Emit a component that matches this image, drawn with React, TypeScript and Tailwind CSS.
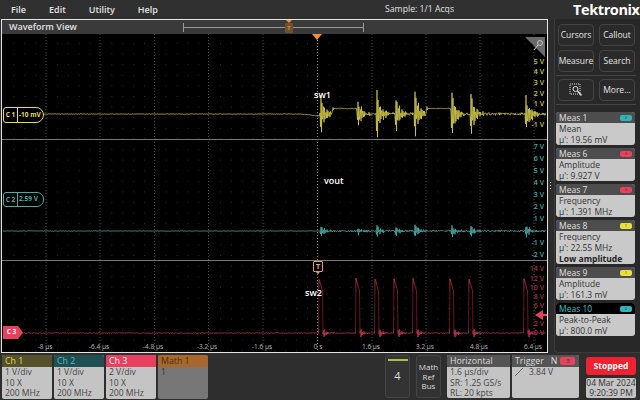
const sans = "font-['Open_Sans','Noto_Sans',sans-serif]";
const gridX = [46, 100, 154.5, 208.5, 263, 317.5, 372, 426, 480, 534];
const bursts = [320, 357, 376, 395, 414, 451, 470, 525];
const burstAmp = [0.85, 0.6, 1, 0.75, 1, 1, 0.9, 0.9];

// small repeatable noise, so the trace looks the same on every load
function noise(i: number) {
  const v = Math.sin(i * 12.9898) * 43758.5453;
  return v - Math.floor(v);
}

function ringing(base: number, amp: number, hash: number, seed: number, raised: (x: number) => number) {
  let d = `M3 ${base}`;
  for (let x = 3; x < 546; x += 0.5) {
    const r = raised(x);
    const h = x < 320 ? 0.25 : r !== 0 ? 0.3 : hash;
    let y = base + r + (noise(x * 2 + seed) - 0.5) * 2 * h;
    bursts.forEach((b, i) => {
      const t = x - b;
      if (t >= 0 && t < 14) {
        const k = Math.exp(-t / 4.5) * (0.6 + noise(x + seed) * 0.4);
        y += Math.sin(t * 5.2) * amp * burstAmp[i] * k;
      }
    });
    d += ` L${x} ${y.toFixed(1)}`;
  }
  return d;
}

function redTrace() {
  let d = "M3 333";
  for (let x = 3; x < 546; x += 0.5) {
    let y = 333 + (noise(x * 3) - 0.5) * 0.7;
    for (const b of bursts) {
      const t = x - b;
      if (t >= -1 && t < 3) y = 278 + (t + 1) * 3.5 + noise(x * 5) * 1.5;
      if (t >= 3 && t < 14) {
        y += Math.sin(t * 5.2) * 6 * Math.exp(-(t - 3) / 3);
      }
    }
    d += ` L${x} ${y.toFixed(1)}`;
  }
  return d;
}

const yellowRaised = (x: number) => {
  if (x < 300) return 0;
  if (x < 320) return (x - 300) * 0.1;
  if (x > 332 && x < 357) return -5.5;
  if (x > 426 && x < 451) return -5.5;
  return 0;
};

function Grid() {
  const rows = [];
  for (let y = 43; y < 352; y += 10.6) rows.push(y);
  const cols = [];
  for (let x = 13.5; x < 546; x += 10.87) cols.push(x);
  return (
    <svg className="absolute inset-0 h-full w-full" viewBox="0 0 545 318" preserveAspectRatio="none">
      <defs>
        <linearGradient id="red" gradientUnits="userSpaceOnUse" x1="0" y1="277" x2="0" y2="340">
          <stop offset="0" stopColor="#dc3c62" />
          <stop offset="0.3" stopColor="#7e1830" />
          <stop offset="0.8" stopColor="#7e1830" />
          <stop offset="0.9" stopColor="#c8385a" />
          <stop offset="1" stopColor="#c8385a" />
        </linearGradient>
      </defs>
      <g transform="translate(-2 -34)">
        {rows.map((y) =>
          cols.map((x) => <rect key={`${x}-${y}`} x={x} y={y} width="1" height="1" fill="#2e2e2e" />)
        )}
        {gridX.map((x) => (
          <line key={x} x1={x} x2={x} y1="34" y2="352" stroke="#4a4a4a" strokeWidth="1" strokeDasharray="1 2" />
        ))}
        <line x1="317.5" x2="317.5" y1="34" y2="352" stroke="#8a8a8a" strokeWidth="1" strokeDasharray="1 2" />
        <path d={ringing(114, 34, 1.4, 1, yellowRaised)} fill="none" stroke="#e0d850" strokeWidth="0.7" />
        <path d={ringing(231, 9, 0.9, 2, () => 0)} fill="none" stroke="#49ada6" strokeWidth="0.8" />
        <path d={redTrace()} fill="none" stroke="url(#red)" strokeWidth="0.8" />
      </g>
    </svg>
  );
}

function AxisLabels({ color, items }: { color: string; items: { t: string; y: number }[] }) {
  return (
    <>
      {items.map((l) => (
        <span
          key={l.t}
          className={`absolute right-[3px] text-[7px] leading-[8px] font-semibold ${color}`}
          style={{ top: l.y - 4 }}
        >
          {l.t}
        </span>
      ))}
    </>
  );
}

function Measure({
  name, kind, value, badge, extra, active,
}: {
  name: string; kind: string; value: string; badge: "t" | "r" | "y"; extra?: string; active?: boolean;
}) {
  const badgeCls = badge === "t" ? "bg-[#2fb4bb]" : badge === "r" ? "bg-[#e8405f]" : "bg-[#e6e23c]";
  const num = badge === "t" ? "2" : badge === "r" ? "3" : "1";
  return (
    <div className="mr-[1px] overflow-hidden rounded-[3px] bg-[#c9c9c9] text-[8.5px] leading-[11px] text-[#333]">
      <div className={`flex h-[11px] items-center justify-between px-[3px] ${active ? "bg-black text-[#3fc0c4]" : "bg-[#4d4d4d] text-[#e0e0e0]"}`}>
        <span>{name}</span>
        <span className={`flex h-[6px] w-[12px] items-center justify-center rounded-[2px] text-[4px] leading-none text-[#333] ${badgeCls}`}>{num}</span>
      </div>
      <div className="px-[3px]">
        <div>{kind}</div>
        <div>{value}</div>
        {extra && <div className="font-bold text-[#222]">{extra}</div>}
      </div>
    </div>
  );
}

function SideButton({ children }: { children: React.ReactNode }) {
  return (
    <div className="flex h-[22px] w-[36px] items-center justify-center rounded-[4px] border border-[#444] bg-[#2a2a2a] text-[8.5px] whitespace-nowrap text-[#e4e4e4]">
      {children}
    </div>
  );
}

function ChannelCard({ title, head, titleCls, lines }: { title: string; head: string; titleCls: string; lines: string[] }) {
  return (
    <div className="h-[44px] w-[50px] overflow-hidden rounded-[2px] bg-[#c4c4c4] text-[8.5px] leading-[10.5px] text-[#444]">
      <div className={`h-[12px] px-[3px] text-[8.8px] leading-[12px] ${head} ${titleCls}`}>{title}</div>
      <div className="px-[3px]">
        {lines.map((l) => (
          <div key={l}>{l}</div>
        ))}
      </div>
    </div>
  );
}

export default function App() {
  return (
    <div className={`flex h-[400px] w-[640px] flex-col overflow-hidden bg-[#2c2c2c] ${sans}`}>
      {/* menu bar */}
      <div className="flex h-[19px] items-center bg-[#303030] text-[9px] font-semibold text-[#e2e2e2]">
        <div className="flex w-[357px] gap-[23px] pl-[11px]">
          <span>File</span>
          <span>Edit</span>
          <span>Utility</span>
          <span>Help</span>
        </div>
        <span className="w-[216px] pl-[28px] text-[8.7px] font-normal">Sample: 1/1 Acqs</span>
        <span className="text-[14.5px] font-bold tracking-[-0.4px] text-white">Tektronix</span>
      </div>

      <div className="flex min-h-0 flex-1">
        {/* waveform view */}
        <div className="ml-[1px] flex w-[547px] flex-col border border-[#e4e4e4] bg-black">
          <div className="relative flex h-[14px] items-center bg-[#3a3a3a] pl-[7px] text-[9px] font-semibold text-[#e0e0e0]">
            Waveform View
            <div className="absolute top-[3px] left-[181px] h-[9px] w-[181px] border-x border-[#999]">
              <div className="mt-[4px] h-px bg-[#999]" />
            </div>
            <div className="absolute top-[3px] left-[283px] flex h-[10px] w-[8px] items-center justify-center rounded-[1px] bg-[#6e5230] text-[6px] leading-none text-[#e0a060]">
              T
            </div>
            <div className="absolute top-0 left-[284px] h-0 w-0 border-x-[3px] border-t-[3px] border-x-transparent border-t-[#f0913a]" />
          </div>
          <div className="relative flex-1">
            <Grid />
            {/* pane separators */}
            <div className="absolute top-[105px] right-0 left-0 h-px bg-[#777]" />
            <div className="absolute top-[226px] right-0 left-0 h-px bg-[#777]" />

            {/* trigger markers */}
            <div className="absolute top-0 left-[310px] h-0 w-0 border-x-[5px] border-t-[6px] border-x-transparent border-t-[#f0913a]" />
            <div className="absolute top-[227px] left-[311px] flex h-[11px] w-[10px] items-center justify-center rounded-[1px] border border-[#e89a4a] bg-black text-[7px] leading-none font-bold text-[#e8b070]">
              T
            </div>
            <div className="absolute top-[238px] left-[314px] h-0 w-0 border-x-[2px] border-t-[2px] border-x-transparent border-t-[#e89a4a]" />

            {/* pinned corner */}
            <svg className="absolute top-[3px] right-[2px]" width="20" height="20" viewBox="0 0 20 20">
              <polygon points="0,0 20,0 20,20" fill="#6a6a6a" />
              <circle cx="15" cy="6" r="2.4" fill="none" stroke="#ccc" strokeWidth="1" />
              <path d="M13 8 L9 13" stroke="#ccc" strokeWidth="1" />
            </svg>

            {/* channel badges */}
            <div className="absolute top-[73px] left-[1px] flex h-[16px] w-[41px] items-center rounded-l-[3px] rounded-r-[8px] border border-[#e6dc50] bg-black text-[6.5px] leading-none font-bold text-[#e6dc50]">
              <span className="w-[14px] border-r border-[#e6dc50] text-center leading-[14px]">C 1</span>
              <span className="pl-[1px] whitespace-nowrap">-10 mV</span>
            </div>
            <div className="absolute top-[158px] left-[1px] flex h-[15px] w-[41px] items-center rounded-l-[3px] rounded-r-[7px] border border-[#49ada6] bg-black text-[6.5px] leading-none font-bold text-[#49ada6]">
              <span className="w-[14px] border-r border-[#49ada6] text-center leading-[13px]">C 2</span>
              <span className="pl-[1px] whitespace-nowrap">2.59 V</span>
            </div>
            <div className="absolute top-[292px] left-[1px] flex h-[13px] w-[20px] items-center justify-center bg-[#e8405f] pr-[3px] text-[6.5px] leading-none font-bold text-white [clip-path:polygon(0_0,75%_0,100%_50%,75%_100%,0_100%)]">
              C 3
            </div>

            {/* annotations */}
            <span className="absolute top-[56px] left-[312px] text-[9px] leading-[10px] font-semibold text-white">sw1</span>
            <span className="absolute top-[142px] left-[322px] text-[9px] leading-[10px] font-semibold text-white">vout</span>
            <span className="absolute top-[254px] left-[303px] text-[9px] leading-[10px] font-semibold text-white">sw2</span>

            <AxisLabels
              color="text-[#cfc94a]"
              items={[
                { t: "5 V", y: 28 },
                { t: "4 V", y: 38 },
                { t: "3 V", y: 49 },
                { t: "2 V", y: 60 },
                { t: "1 V", y: 70 },
                { t: "-1 V", y: 91 },
              ]}
            />
            <AxisLabels
              color="text-[#49ada6]"
              items={[
                { t: "7 V", y: 113 },
                { t: "6 V", y: 125 },
                { t: "5 V", y: 137 },
                { t: "4 V", y: 149 },
                { t: "3 V", y: 161 },
                { t: "2 V", y: 173 },
                { t: "1 V", y: 185 },
                { t: "-1 V", y: 209 },
                { t: "-2 V", y: 221 },
              ]}
            />
            <AxisLabels
              color="text-[#a82c48]"
              items={[
                { t: "14 V", y: 235 },
                { t: "12 V", y: 245 },
                { t: "10 V", y: 254 },
                { t: "8 V", y: 263 },
                { t: "6 V", y: 272 },
                { t: "2 V", y: 290 },
                { t: "0 V", y: 299 },
              ]}
            />
            <div className="absolute top-[276px] right-[4px] h-0 w-0 border-y-[5px] border-r-[8px] border-y-transparent border-r-[#e8405f]" />
            <div className="absolute top-[280px] right-0 h-[2px] w-[5px] bg-[#e8405f]" />

            {/* time axis */}
            {[
              ["-8 µs", 43],
              ["-6.4 µs", 97],
              ["-4.8 µs", 151],
              ["-3.2 µs", 205],
              ["-1.6 µs", 260],
              ["0 s", 316],
              ["1.6 µs", 369],
              ["3.2 µs", 423],
              ["4.8 µs", 477],
              ["6.4 µs", 531],
            ].map(([t, x]) => (
              <span
                key={t}
                className="absolute bottom-0 -translate-x-1/2 text-[6.5px] leading-[10px] whitespace-nowrap text-[#bbb]"
                style={{ left: x }}
              >
                {t}
              </span>
            ))}
          </div>
        </div>

        {/* right side panel */}
        <div className="relative flex flex-1 pl-[6px]">
          <div className="absolute top-[163px] left-[2px] flex flex-col gap-[2px]">
            <span className="h-px w-px bg-[#ddd]" />
            <span className="h-px w-px bg-[#ddd]" />
            <span className="h-px w-px bg-[#ddd]" />
          </div>
          <div className="flex flex-1 flex-col rounded-bl-[4px] border-b border-l border-[#3c3c3c] bg-[#282828] pt-[5px] pr-[4px] pl-[1px]">
            <div className="grid grid-cols-[36px_36px] gap-x-[5px] gap-y-[4px] border-b border-[#444] pb-[3px] pl-[2px]">
              <SideButton>Cursors</SideButton>
              <SideButton>Callout</SideButton>
              <SideButton>Measure</SideButton>
              <SideButton>Search</SideButton>
            </div>
            <div className="grid grid-cols-[36px_36px] gap-x-[5px] border-b border-[#444] py-[3px] pl-[2px]">
              <SideButton>
                <svg width="14" height="14" viewBox="0 0 14 14" fill="none" stroke="#ddd" strokeWidth="1">
                  <rect x="1" y="1" width="10" height="10" strokeDasharray="1 1" />
                  <circle cx="6.5" cy="6" r="2.5" />
                  <path d="M8.5 8 L12.5 12.5" strokeWidth="1.5" />
                </svg>
              </SideButton>
              <SideButton>More...</SideButton>
            </div>
            <div className="flex flex-col gap-[3px] pt-[7px]">
              <Measure name="Meas 1" kind="Mean" value="µ': 19.56 mV" badge="t" />
              <Measure name="Meas 6" kind="Amplitude" value="µ': 9.927 V" badge="r" />
              <Measure name="Meas 7" kind="Frequency" value="µ': 1.391 MHz" badge="r" />
              <Measure name="Meas 8" kind="Frequency" value="µ': 22.55 MHz" badge="y" extra="Low amplitude" />
              <Measure name="Meas 9" kind="Amplitude" value="µ': 161.3 mV" badge="y" />
              <Measure name="Meas 10" kind="Peak-to-Peak" value="µ': 800.0 mV" badge="t" active />
            </div>
          </div>
        </div>
      </div>

      {/* bottom bar */}
      <div className="flex h-[47px] items-start bg-[#2e2e2e] pt-[2px] pl-[2px]">
        <div className="flex gap-[2px]">
          <ChannelCard title="Ch 1" head="bg-[#55512a]" titleCls="text-[#e6dc50]" lines={["1 V/div", "10 X", "200 MHz"]} />
          <ChannelCard title="Ch 2" head="bg-[#1f4f50]" titleCls="text-[#49c0c0]" lines={["1 V/div", "10 X", "200 MHz"]} />
          <ChannelCard title="Ch 3" head="bg-[#e8405f]" titleCls="text-white" lines={["2 V/div", "10 X", "200 MHz"]} />
          <div className="h-[44px] w-[50px] overflow-hidden rounded-[2px] bg-[#777] text-[8.5px] leading-[10.5px] text-[#333]">
            <div className="h-[12px] bg-[#a8672c] px-[3px] text-[8.8px] leading-[12px] text-[#4a3015]">Math 1</div>
            <div className="px-[3px]">1</div>
          </div>
        </div>

        <div className="ml-[177px] flex h-[43px] w-[25px] flex-col items-center rounded-[3px] border border-[#444] bg-[#333] text-[#ddd]">
          <div className="mt-[3px] h-[2px] w-[20px] bg-[#a8c04a]" />
          <span className="mt-[7px] text-[11px]">4</span>
        </div>
        <div className="ml-[6px] flex h-[43px] w-[25px] flex-col items-center justify-center rounded-[3px] border border-[#444] bg-[#333] text-[8px] leading-[9.5px] text-[#ddd]">
          <span>Math</span>
          <span>Ref</span>
          <span>Bus</span>
        </div>

        <div className="ml-[6px] h-[43px] w-[63px] overflow-hidden rounded-[2px] bg-[#c4c4c4] text-[8.5px] leading-[10.5px] text-[#444]">
          <div className="h-[12px] bg-[#555] px-[3px] text-[8.8px] leading-[12px] text-[#ddd]">Horizontal</div>
          <div className="px-[3px]">
            <div>1.6 µs/div</div>
            <div>SR: 1.25 GS/s</div>
            <div>RL: 20 kpts</div>
          </div>
        </div>
        <div className="ml-[2px] h-[43px] w-[67px] overflow-hidden rounded-[2px] bg-[#c4c4c4] text-[8.5px] leading-[10.5px] text-[#444]">
          <div className="flex h-[12px] items-center bg-[#555] px-[3px] text-[8.8px] leading-[12px] text-[#ddd]">
            <span>Trigger</span>
            <span className="ml-[7px]">N</span>
            <span className="ml-[3px] flex h-[8px] w-[15px] items-center justify-center rounded-[2px] bg-[#e8405f] text-[6px] leading-none text-[#333]">3</span>
          </div>
          <div className="flex items-center gap-[6px] pl-[3px]">
            <svg width="8" height="8" viewBox="0 0 8 8">
              <path d="M0 8 L8 0" fill="none" stroke="#667" strokeWidth="1" />
            </svg>
            <span>3.84 V</span>
          </div>
        </div>

        <div className="mt-[2px] ml-[7px] flex w-[50px] flex-col gap-[3px]">
          <div className="flex h-[18px] items-center justify-center rounded-[3px] bg-[#ee2230] text-[8.5px] font-bold text-white">Stopped</div>
          <div className="rounded-[2px] bg-[#c4c4c4] text-center text-[8.5px] leading-[10px] whitespace-nowrap text-[#333]">
            <div>04 Mar 2024</div>
            <div>9:20:39 PM</div>
          </div>
        </div>
      </div>
    </div>
  );
}
